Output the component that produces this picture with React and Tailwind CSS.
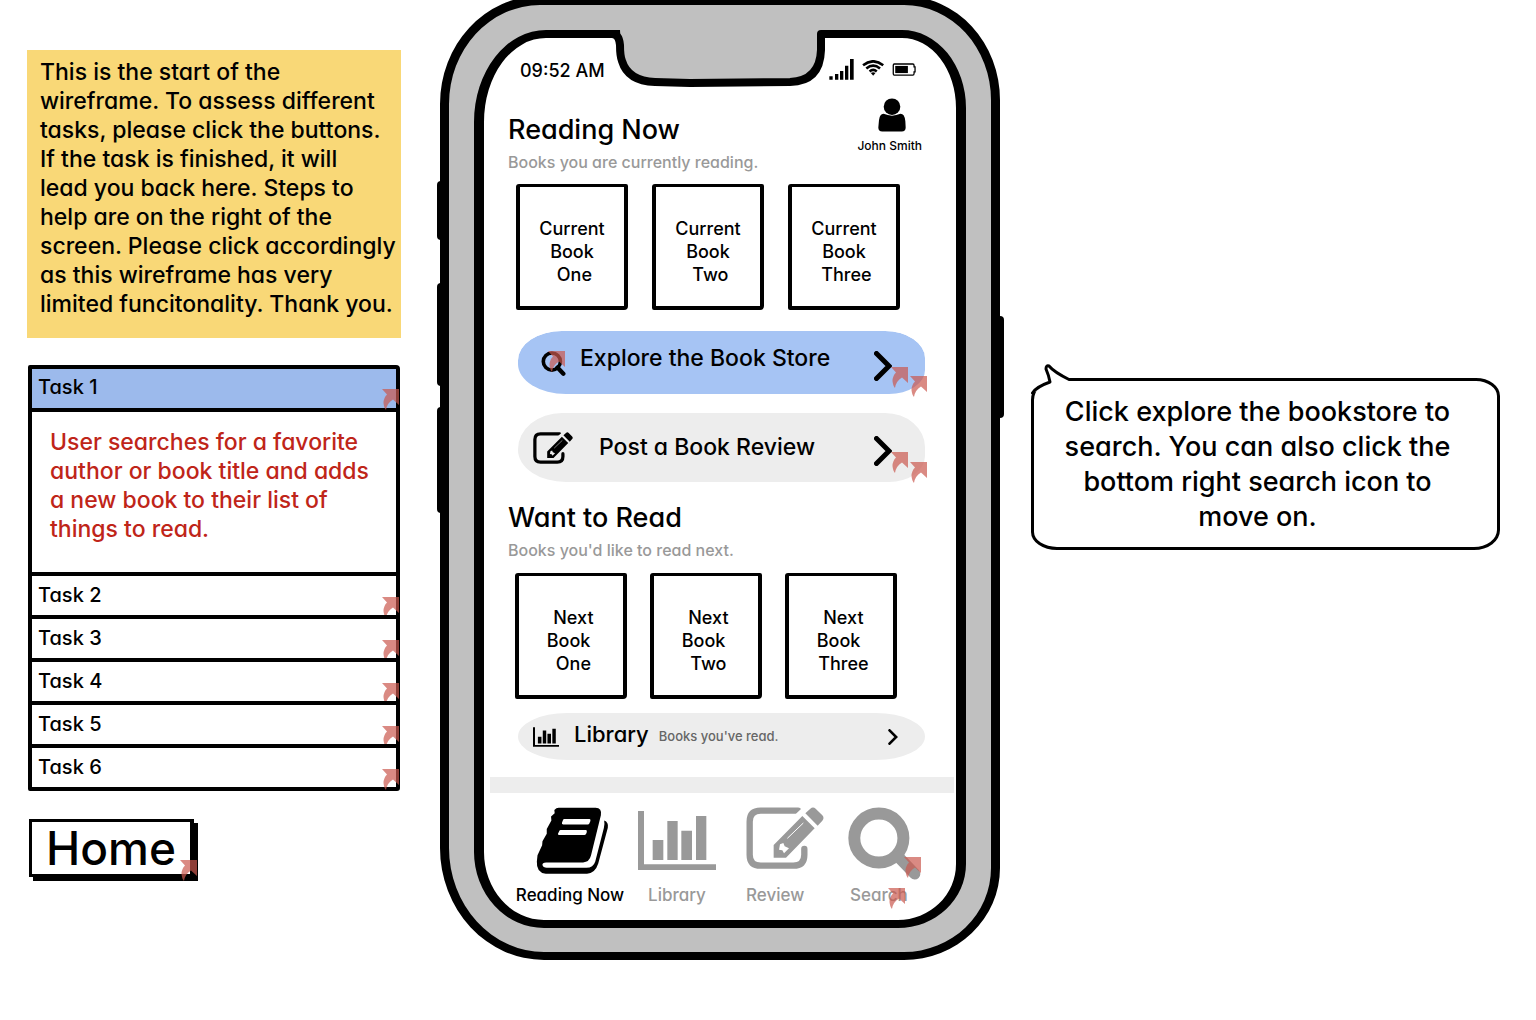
import React, { useState } from "react";

/* Small translucent marker that shows an element carries a link. */
function LinkMark({ className }) {
  return (
    <svg viewBox="0 0 17 21" aria-hidden="true" className={`pointer-events-none absolute h-[21px] w-[17px] ${className}`}>
      <path d="M0 0H17V16L11 10.500Q5 14 4 21Q2 19 1.500 14Q1.500 9 5 5.500Z" fill="#ca594e" fillOpacity="0.7" />
    </svg>
  );
}

function BookIcon() {
  return (
    <svg viewBox="108 321 220 203" aria-hidden="true" className="h-[67px] w-[73px]">
      <path
        fill="#000"
        d="M176 323H288Q308 324 304 346L274 468Q269 488 250 489H138Q126 490 127 497Q129 505 140 505H260Q281 505 287 486L313 385Q316 371 314 362Q328 367 325 384L296 492Q287 521 262 523H137Q108 520 110 486L112 467L126 437L127 425L140 402L140 388L154 362L153 350L164 340L163 330Q169 323 176 323Z"
      />
      <path fill="#fff" d="M193 357H270Q274 358 272 364L269 371Q268 374 264 374H190Q185 374 186 369L189 361Q190 357 193 357ZM182 391H259Q263 392 261 398L259 403Q257 406 254 406H178Q173 406 174 402L178 394Q179 391 182 391Z" />
    </svg>
  );
}

function ChartIcon({ className }) {
  return (
    <svg viewBox="413 333 234 177" aria-hidden="true" fill="currentColor" className={className}>
      <path d="M413 333H431V493H647V510H413ZM457 420H489V480H457ZM501 363H532V480H501ZM543 392H575V480H543ZM587 348H618V480H587Z" />
    </svg>
  );
}

function ReviewIcon({ className, hole }) {
  return (
    <svg viewBox="736 322 234 186" aria-hidden="true" className={className}>
      <path d="M892 333H780Q747 333 747 366V465Q747 498 780 498H878Q911 498 911 465V448" fill="none" stroke="currentColor" strokeWidth="19" strokeLinecap="round" />
      <path d="M886 342L905 324L930 350L850 420Z" fill={hole} />
      <path d="M905 349L942 386L856 474H819V436ZM914 341L929 327Q937 320 945 327L965 347Q972 355 965 363L951 378Z" fill="currentColor" />
      <path d="M835 450L838 434L848 430L852 440L865 446L850 461L845 452Z" fill={hole} />
      <path d="M860 416L908 370" stroke={hole} strokeWidth="3" />
    </svg>
  );
}

function SearchIcon() {
  return (
    <svg viewBox="1042 322 220 219" aria-hidden="true" className="h-[73px] w-[73px]" fill="none" stroke="currentColor">
      <circle cx="1135" cy="415" r="74" strokeWidth="36" />
      <path d="M1192 470L1243 523" strokeWidth="34" strokeLinecap="round" />
    </svg>
  );
}

function SmallSearchIcon() {
  return (
    <svg viewBox="122 125 76 76" aria-hidden="true" className="h-[25px] w-[25px]" fill="none" stroke="#000">
      <circle cx="155" cy="157" r="26" strokeWidth="11" />
      <path d="M172 175L190 194" strokeWidth="13" strokeLinecap="round" />
    </svg>
  );
}

function Chevron({ className, weight }) {
  return (
    <svg viewBox="0 0 18 30" aria-hidden="true" className={className} fill="none" stroke="#000" strokeLinecap="round" strokeLinejoin="miter">
      <path d="M2.500 2.500L15 15L2.500 27.500" strokeWidth={weight} />
    </svg>
  );
}

function StatusIcons() {
  return (
    <div className="mb-[3px] flex items-center gap-2">
      <svg viewBox="297 174 75 63" aria-label="Signal" className="h-[21px] w-[25px]">
        <path d="M298 226h10v10h-10zM315 219h10v17h-10zM330 210h10v26h-10zM345 194h10v42h-10zM360 174h11v62h-11z" />
      </svg>
      <svg viewBox="395 176 67 49" aria-label="Wi-Fi" className="mb-1 h-[16px] w-[22px]" fill="none" stroke="#000" strokeWidth="8">
        <path d="M398 192Q429 168 460 192M408 202Q429 185 450 202M418 211Q429 202 440 211" />
        <path d="M422 216Q429 211 436 216L429 224Z" fill="#000" stroke="none" />
      </svg>
      <svg viewBox="489 185 72 40" aria-label="Battery" className="h-[13px] w-[24px]">
        <path d="M495 188H552Q556 188 556 193V197H559V212H556V217Q556 222 552 222H495Q492 222 492 218V192Q492 188 495 188Z" fill="none" stroke="#000" strokeWidth="4" />
        <path d="M498 194H537V216H498Z" />
      </svg>
    </div>
  );
}

function PersonIcon() {
  return (
    <svg viewBox="446 294 86 103" aria-hidden="true" className="ml-1 h-[34px] w-[28px]">
      <circle cx="489" cy="320" r="25.500" />
      <path d="M463 342Q489 353 515 342Q528 342 530 365L531 384Q531 396 519 396H459Q447 396 447 384L449 362Q451 342 463 342Z" />
    </svg>
  );
}

/* Camera housing that hangs from the top edge of the screen. */
function Notch() {
  return (
    <svg viewBox="608 28 222 62" aria-hidden="true" className="pointer-events-none absolute -top-[10px] left-[124px] h-[62px] w-[222px]">
      <path d="M608 28H830V30H821V50Q820 82 790 82L690 83L655 82Q624 79 621 48L620 30H608Z" fill="#c0c0c0" />
      <path d="M608 34H612Q619 34 620 45Q620 56 622 61Q628 81 655 82L690 83L790 82Q820 81 821 50V34H830" fill="none" stroke="#000" strokeWidth="8" strokeLinejoin="round" />
    </svg>
  );
}

function Phone({ children }) {
  return (
    <div className="relative -mt-1 w-[560px] shrink-0 rounded-[100px_96px_96px_104px/108px_104px_92px_112px] border-[9px] border-b-8 border-black bg-[#c0c0c0] px-[25px] pt-[25px] pb-6">
      <span className="absolute top-[176px] -left-3 h-[59px] w-1 rounded-l-sm bg-black" />
      <span className="absolute top-[278px] -left-3 h-[103px] w-1 rounded-l-sm bg-black" />
      <span className="absolute top-[402px] -left-3 h-[106px] w-1 rounded-l-sm bg-black" />
      <span className="absolute top-[311px] -right-[13px] h-[102px] w-1 rounded-r-sm bg-black" />
      <div className="relative flex flex-col rounded-[72px_64px_68px_70px/92px_78px_64px_76px] border-x-[10px] border-y-8 border-black bg-white">
        <Notch />
        {children}
      </div>
    </div>
  );
}

function SectionTitle({ title, note }) {
  return (
    <div>
      <h2 className="text-[27px] leading-9 font-medium">{title}</h2>
      <p className="text-base leading-7 font-medium text-[#999]">{note}</p>
    </div>
  );
}

function BookCards({ books, className, pad }) {
  return (
    <div className={`flex ${className}`}>
      {books.map((b) => (
        <button
          key={b}
          className={`h-[126px] w-[112px] rounded-[3px_2px_4px_2px] border-4 border-t-[3px] border-black bg-white text-center text-lg leading-[23px] font-medium whitespace-pre ${pad}`}
        >
          {b}
        </button>
      ))}
    </div>
  );
}

const tasks = ["Task 2", "Task 3", "Task 4", "Task 5", "Task 6"];

function Tasks() {
  const [open, setOpen] = useState(true);
  return (
    <section className="mt-[27px] ml-px w-[372px] rounded-[2px_4px_3px_2px] border-4 border-black">
      <button onClick={() => setOpen(!open)} aria-expanded={open} className="relative flex h-[43px] w-full items-center border-b-4 border-black bg-[#9cbaec] px-1.5 pb-1 text-left text-xl font-medium">
        Task 1
        <LinkMark className="-right-[3px] -bottom-0.5" />
      </button>
      {open && (
        <p className="h-[160px] pt-[16px] pr-2 pl-[18px] text-[23px] leading-[29px] font-medium whitespace-nowrap text-[#bf2519]">
          User searches for a favorite
          <br />
          author or book title and adds
          <br />a new book to their list of
          <br />
          things to read.
        </p>
      )}
      {tasks.map((t) => (
        <button key={t} className="relative flex h-[43px] w-full items-center border-t-4 border-black px-1.5 pb-0.5 text-left text-xl font-medium">
          {t}
          <LinkMark className="-right-[3px] -bottom-[3px]" />
        </button>
      ))}
    </section>
  );
}

export default function App() {
  return (
    <main className="flex min-h-screen items-start bg-white pr-9 pl-[27px] font-['Inter',sans-serif] text-black [font-feature-settings:'cv11']">
      <aside className="w-[374px] shrink-0 pt-[50px]">
        <p className="h-[288px] bg-[#f9d877] px-[13px] pt-2 text-[23px] leading-[29px] font-medium whitespace-nowrap">
          This is the start of the
          <br />
          wireframe. To assess different
          <br />
          tasks, please click the buttons.
          <br />
          If the task is finished, it will
          <br />
          lead you back here. Steps to
          <br />
          help are on the right of the
          <br />
          screen. Please click accordingly
          <br />
          as this wireframe has very
          <br />
          limited funcitonality. Thank you.
        </p>
        <Tasks />
        <button className="relative mt-7 ml-0.5 flex h-[58px] items-center border-[3px] border-r-4 border-black bg-white px-3.5 text-[46px] font-medium shadow-[4px_4px_0_#000]">
          Home
          <LinkMark className="-right-[7px] -bottom-[7px]" />
        </button>
      </aside>

      <div className="ml-[39px] shrink-0">
        <Phone>
          <div className="flex h-[45px] items-end justify-between pr-[40px] pl-9">
            <span className="text-lg leading-6 font-medium">09:52 AM</span>
            <StatusIcons />
          </div>
          <div className="flex items-start justify-between pr-[34px] pl-6">
            <div className="pt-[29px]">
              <SectionTitle title="Reading Now" note="Books you are currently reading." />
            </div>
            <button className="flex flex-col items-center pt-[15px]">
              <PersonIcon />
              <span className="pt-1 text-xs leading-5 font-medium">John Smith</span>
            </button>
          </div>
          <BookCards className="mt-2 gap-6 pl-8" pad="pt-2.5" books={["Current\nBook\n One", "Current\nBook\n Two", "Current\nBook\n Three"]} />

          <div className="mr-[31px] ml-[34px]">
            <button className="relative mt-4 flex h-[68px] w-full items-center rounded-[44px_40px_36px_48px/34px_32px_24px_30px] border-t-[5px] border-white bg-[#a6c4f4] bg-clip-padding pr-[33px] pb-2 pl-[23px]">
              <span className="relative pt-2.5">
                <SmallSearchIcon />
                <LinkMark className="top-2.5 left-[7px]" />
              </span>
              <span className="flex-1 pl-[14px] text-left text-[23px] font-medium">Explore the Book Store</span>
              <span className="pt-3.5">
                <Chevron className="h-[30px] w-[18px]" weight="5" />
              </span>
              <LinkMark className="top-[36px] right-[17px]" />
              <LinkMark className="top-[45px] -right-0.5" />
            </button>
            <button className="relative mt-[19px] flex h-[69px] w-full items-center rounded-[44px_40px_36px_48px/36px_34px_26px_32px] bg-[#ededed] pr-[33px] pl-[15px]">
              <ReviewIcon className="h-[32px] w-[40px]" hole="#ededed" />
              <span className="flex-1 pl-[26px] text-left text-[23px] font-medium">Post a Book Review</span>
              <span className="pt-1.5">
                <Chevron className="h-[30px] w-[18px]" weight="5" />
              </span>
              <LinkMark className="top-[39px] right-[17px]" />
              <LinkMark className="top-[49px] -right-0.5" />
            </button>
          </div>

          <div className="mt-[18px] pl-6">
            <SectionTitle title="Want to Read" note="Books you'd like to read next." />
          </div>
          <BookCards className="mt-[9px] gap-[23px] pl-[31px]" pad="pt-2.5" books={[" Next\nBook \n One", " Next\nBook \n Two", " Next\nBook \n Three"]} />

          <div className="mr-[31px] ml-[34px]">
            <button className="mt-[14px] flex h-[47px] w-full items-center rounded-[50px/24px] bg-[#ededed] pr-[27px] pl-[15px]">
              <ChartIcon className="h-5 w-[26px]" />
              <span className="pb-1 pl-[15px] text-[22px] font-medium">Library</span>
              <span className="flex-1 pl-2.5 text-left text-[13px] font-medium text-[#666]">Books you've read.</span>
              <Chevron className="h-4 w-2.5" weight="5" />
            </button>
          </div>

          <nav className="mt-[17px]">
            <div className="mx-1.5 mr-0.5 h-4 bg-[#ededed]" />
            <div className="grid h-[127px] grid-cols-[121px_108px_102px_80px] items-start pt-[14px] pl-[33px] text-[17px] leading-6 font-medium text-[#999]">
              <button className="flex h-[100px] w-[106px] flex-col items-center justify-between text-black">
                <span className="pl-1">
                  <BookIcon />
                </span>
                <span className="whitespace-nowrap">Reading Now</span>
              </button>
              <button className="flex h-[100px] w-[78px] flex-col items-center justify-between">
                <ChartIcon className="mt-1 h-[59px] w-[78px]" />
                Library
              </button>
              <button className="flex h-[100px] w-[78px] flex-col items-start justify-between">
                <ReviewIcon className="h-[62px] w-[78px]" hole="#fff" />
                Review
              </button>
              <button className="relative flex h-[100px] w-[73px] flex-col items-start justify-between">
                <SearchIcon />
                <span className="pl-0.5">Search</span>
                <LinkMark className="top-[50px] right-0" />
                <LinkMark className="top-[81px] right-4" />
              </button>
            </div>
          </nav>
        </Phone>
      </div>

      <div className="relative mt-[378px] ml-[31px] flex-1 rounded-[24px_24px_26px_26px/22px_18px_20px_18px] border-[3px] border-black bg-white pt-[13px] pr-4 pb-[13px] text-center text-[27px] leading-[35px] font-medium whitespace-nowrap">
        <svg viewBox="0 0 46 34" aria-hidden="true" className="absolute -top-[17px] -left-[3px] h-[34px] w-[46px]">
          <path d="M0 28V10H38V19.500Z" fill="#fff" />
          <path d="M1.500 29Q5 23 19 18Q18 12 15 5Q15 1 18 2Q23 8 38 15.500" fill="#fff" stroke="#000" strokeWidth="3" strokeLinejoin="round" strokeLinecap="round" />
        </svg>
        <p>
          Click explore the bookstore to
          <br />
          search. You can also click the
          <br />
          bottom right search icon to
          <br />
          move on.
        </p>
      </div>
    </main>
  );
}
